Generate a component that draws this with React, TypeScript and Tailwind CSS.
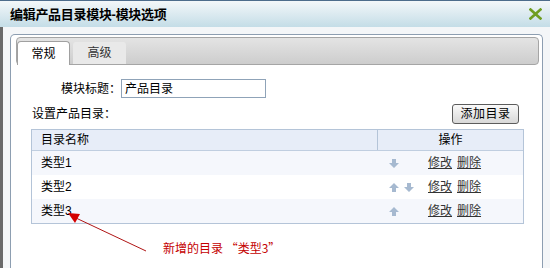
const rows = [
  { name: "类型1", up: false, down: true },
  { name: "类型2", up: true, down: true },
  { name: "类型3", up: true, down: false },
];

function Arrow({ dir }: { dir: "up" | "down" }) {
  return (
    <svg width="10" height="9" viewBox="0 0 10 9">
      {dir === "down" ? (
        <path d="M3 0h4v4h3L5 9 0 4h3z" fill="#a6b9d0" />
      ) : (
        <path d="M5 0l5 5H7v4H3V5H0z" fill="#a6b9d0" />
      )}
    </svg>
  );
}

export default function App() {
  return (
    <div
      className="relative w-[550px] h-[268px] overflow-hidden flex flex-col bg-[#f4f6f8] text-[12px] text-black"
      style={{ fontFamily: '"Liberation Sans", "Noto Sans CJK SC", sans-serif' }}
    >
      {/* title bar */}
      <div className="h-[27px] shrink-0 border-t border-[#4d6c8b] bg-gradient-to-b from-[#f3f7f9] to-[#c4dde7] flex items-center justify-between pl-[10px] pr-[8px]">
        <span className="text-[13px] font-bold leading-none tracking-[-0.3px]">编辑产品目录模块-模块选项</span>
        <svg width="13" height="12" viewBox="0 0 13 12">
          <path d="M1.5 1.5l10 9M11.5 1.5l-10 9" stroke="#6f9e22" strokeWidth="2.6" strokeLinecap="square" />
        </svg>
      </div>

      <div className="flex-1 flex">
        <div className="w-[3px] bg-[#6a6a6a]" />
        <div className="flex-1 pl-[7px] pr-[7px] pt-[7px]">
          {/* panel */}
          <div className="h-full border border-b-0 border-[#8d9eb1] rounded-t-[5px] bg-white pl-[5px] pt-[2px]">
            {/* tab strip */}
            <div className="w-[523px] h-[28px] border border-[#a5a5a5] rounded-[4px] bg-gradient-to-b from-[#e4e4e4] to-[#cdcdcd] flex items-end">
              <div className="w-[53px] h-[24px] -mb-px bg-white border border-b-0 border-[#a0a0a0] rounded-t-[4px] flex items-center justify-center leading-none">
                常规
              </div>
              <div className="ml-[3px] w-[53px] h-[22px] bg-[#e9e9e9] rounded-t-[3px] flex items-center justify-center leading-none text-[#333]">
                高级
              </div>
            </div>

            {/* form */}
            <div className="mt-[14px] flex items-center">
              <div className="w-[105px] text-right leading-none">模块标题：</div>
              <div className="w-[145px] h-[19px] border border-[#8fa3b8] flex items-center pl-[3px] leading-none">
                产品目录
              </div>
            </div>

            <div className="ml-[15px] w-[493px]">
              <div className="mt-[6px] h-[20px] flex items-center justify-between pl-[1px] pr-[5px]">
                <span className="leading-none">设置产品目录：</span>
                <button className="w-[67px] h-[20px] border border-[#5c5c5c] rounded-[3px] bg-gradient-to-b from-[#fafafa] to-[#d8d8d8] text-[12px] leading-none tracking-[0.5px]">
                  添加目录
                </button>
              </div>

              {/* table */}
              <div className="mt-[5px] border border-[#b4c4d8]">
                <div className="h-[21px] bg-[#e7edf8] border-b border-[#c0cee0] flex">
                  <div className="w-[345px] pl-[9px] flex items-center leading-none">目录名称</div>
                  <div className="flex-1 border-l border-[#b4c4d8] flex items-center justify-center leading-none">操作</div>
                </div>
                {rows.map((r, i) => (
                  <div key={i} className={`h-[24px] flex ${i % 2 === 0 ? "bg-[#f5f7fc]" : "bg-white"}`}>
                    <div className="w-[345px] pl-[9px] flex items-center leading-none">{r.name}</div>
                    <div className="flex-1 pl-[12px] flex items-center">
                      <div className="w-[39px] flex items-center gap-[5px]">
                        {r.up && <Arrow dir="up" />}
                        {r.down && <Arrow dir="down" />}
                      </div>
                      <a className="underline text-[#333] leading-none">修改</a>
                      <a className="ml-[5px] underline text-[#333] leading-none">删除</a>
                    </div>
                  </div>
                ))}
              </div>
            </div>
          </div>
        </div>
      </div>

      {/* annotation */}
      <svg className="absolute left-0 top-0 pointer-events-none" width="550" height="268">
        <line x1="76" y1="218" x2="146" y2="251" stroke="#b01515" strokeWidth="1" />
        <polygon points="68,213 80,214 75,223" fill="#d40000" />
      </svg>
      <div
        className="absolute left-[163px] top-[242px] text-[12px] leading-none text-[#c40000]"
        style={{ fontFamily: '"Noto Sans CJK SC", sans-serif' }}
      >
        新增的目录 “类型3”
      </div>
    </div>
  );
}
